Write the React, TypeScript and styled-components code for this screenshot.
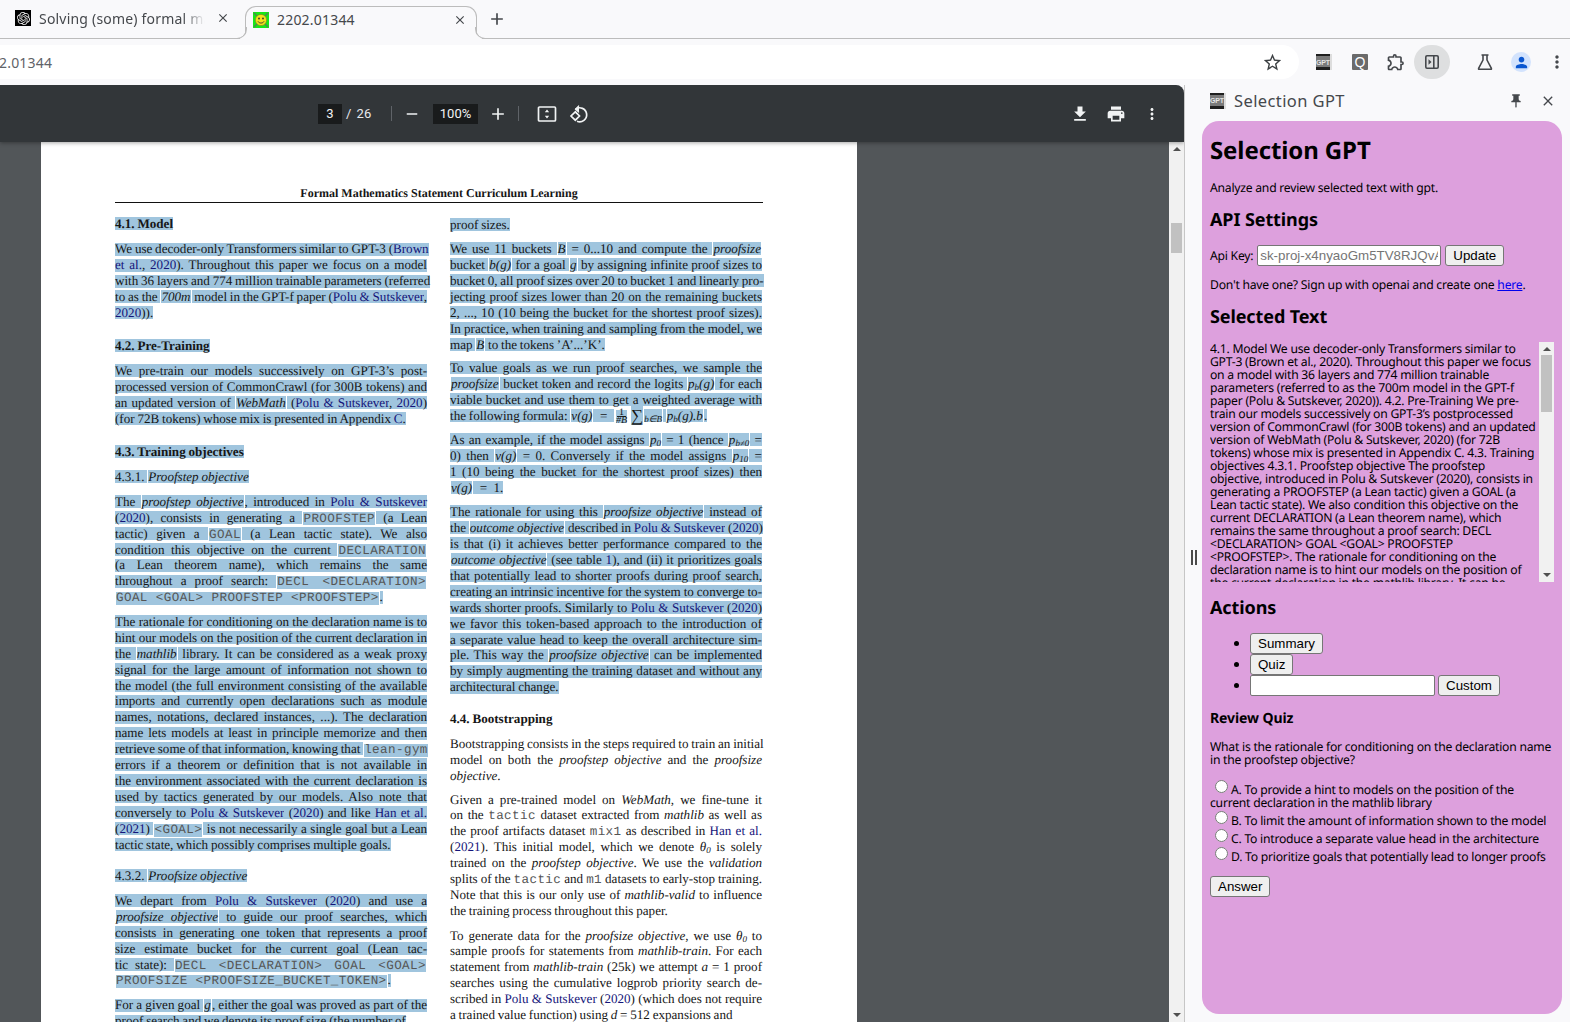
import React from "react";
import styled, { createGlobalStyle, css } from "styled-components";
import { SiOpenai } from "react-icons/si";
import {
  MdAdd, MdClose, MdFileDownload, MdMoreVert, MdOutlineExtension, MdPerson, MdPrint, MdPushPin, MdRemove, MdStarBorder,
} from "react-icons/md";

const chromeBg = "#f9f9fb";
const uiFont = `"Noto Sans", "Open Sans", sans-serif`;

const Global = createGlobalStyle`
  html, body { margin: 0; padding: 0; height: 100%; overflow: hidden; background: ${chromeBg}; }
  #root { height: 100%; }
  * { box-sizing: border-box; }
`;

const Window = styled.div`
  width: 1570px; height: 1022px; display: flex; flex-direction: column; overflow: hidden;
  background: ${chromeBg}; font-family: ${uiFont};
`;

/* ---------- tab strip ---------- */
const TabStrip = styled.div`
  height: 39px; flex: none; display: flex; align-items: flex-end;
  border-bottom: 1px solid #bcbcbc; position: relative;
`;
const Tab = styled.div<{ $active?: boolean }>`
  height: 32px; display: flex; align-items: center; position: relative; flex: none; font-size: 14px; letter-spacing: .2px; color: #45484c;
  ${(p) => p.$active ? css`
    width: 232px; margin-bottom: -1px; height: 33px; padding: 0 0 7px 7px; background: ${chromeBg};
    border: 1px solid #bcbcbc; border-bottom: 0; border-radius: 11px 11px 0 0;
    &::before, &::after {
      content: ""; position: absolute; bottom: 0; width: 10px; height: 11px; border: 0 solid #bcbcbc; border-bottom-width: 1px;
    }
    &::before { left: -10px; border-right-width: 1px; border-bottom-right-radius: 10px; box-shadow: 4px 3px 0 ${chromeBg}; }
    &::after { right: -10px; border-left-width: 1px; border-bottom-left-radius: 10px; box-shadow: -4px 3px 0 ${chromeBg}; }
  ` : css`width: 245px; padding-left: 15px; margin-bottom: 4px;`}
`;
const BlackFavicon = styled.span`
  width: 16px; height: 16px; background: #000; color: #eee; display: flex; align-items: center; justify-content: center; flex: none;
`;
const TabTitle = styled.span`
  flex: 1; margin-left: 8px; white-space: nowrap; overflow: hidden; min-width: 0;
`;
const FadedTitle = styled(TabTitle)`
  -webkit-mask-image: linear-gradient(90deg, #000 84%, transparent 97%);
  mask-image: linear-gradient(90deg, #000 84%, transparent 97%);
`;
const TabClose = styled.span<{ $right: number }>`
  width: 16px; margin: 0 ${(p) => p.$right}px 0 6px; display: flex; color: #45484c; flex: none;
`;
const NewTab = styled.span`
  margin-left: 10px; margin-bottom: 3px; width: 20px; height: 32px; display: flex; align-items: center; justify-content: center; color: #45484c;
`;

/* ---------- toolbar ---------- */
const Toolbar = styled.div`
  height: 46px; flex: none; display: flex; align-items: center;
`;
const Omnibox = styled.div`
  width: 1299px; flex: none; height: 34px; background: #fff; border-radius: 0 17px 17px 0; display: flex; align-items: center; justify-content: space-between;
  padding-right: 16px; font-size: 14px; letter-spacing: .2px; color: #5f6368; overflow: hidden;
`;
const UrlText = styled.span`
  margin-left: -1px;
`;
const ToolSlot = styled.span<{ $on?: boolean; $gapLeft?: number }>`
  width: 36px; height: 34px; flex: none; display: flex; align-items: center; justify-content: center; color: #45484c;
  margin-left: ${(p) => p.$gapLeft ?? 0}px;
  ${(p) => p.$on && css`background: #dedfe0; border-radius: 17px;`}
`;
const GptBadge = styled.span<{ $size: number }>`
  width: ${(p) => p.$size}px; height: ${(p) => p.$size}px; display: flex; align-items: center; justify-content: center; flex: none;
  background: linear-gradient(#1f1f1f 0 2px, #7a7a7a 2px 13px, #1f1f1f 13px); color: #e4e4e4;
  font: 700 7px "Liberation Sans", sans-serif; border-right: 2px solid #ddd; letter-spacing: -.2px;
`;
const QBadge = styled.span`
  width: 16px; height: 16px; background: #6a6a6a; color: #fff; border-radius: 1px; display: flex; align-items: center; justify-content: center;
  font: 400 14px "Liberation Sans", sans-serif;
`;
const Avatar = styled.span`
  width: 20px; height: 20px; border-radius: 50%; background: #d3e3fd; color: #0b57d0; display: flex; align-items: center; justify-content: center;
`;

/* ---------- main ---------- */
const Main = styled.div`
  flex: 1; min-height: 0; display: flex;
`;
const Viewer = styled.div`
  width: 1184px; flex: none; display: flex; flex-direction: column; border-top-right-radius: 8px; overflow: hidden;
`;
const ViewerBar = styled.div`
  height: 57px; flex: none; background: #323639; display: flex; align-items: center; color: #f1f3f4; font: 400 13px Roboto, sans-serif;
  position: relative; box-shadow: 0 1px 4px rgba(0,0,0,.35); padding: 0 14px 0 318px; z-index: 1;
`;
const DarkField = styled.span<{ $w: number }>`
  width: ${(p) => p.$w}px; height: 20px; background: #191b1c; display: flex; align-items: center; justify-content: center; flex: none;
`;
const PageCount = styled.span`
  margin-left: 4px; width: 27px; word-spacing: 2px; color: #e8eaed;
`;
const BarSep = styled.span<{ $left: number }>`
  width: 1px; height: 15px; background: #5f6368; margin-left: ${(p) => p.$left}px; flex: none;
`;
const BarSlot = styled.span<{ $w: number; $left?: number }>`
  width: ${(p) => p.$w}px; margin-left: ${(p) => p.$left ?? 0}px; height: 24px; display: flex; align-items: center; justify-content: center; flex: none;
`;
const ZoomField = styled(DarkField)`
  margin-left: 9px;
`;
const BarRight = styled.div`
  margin-left: auto; display: flex;
`;
const ViewerBody = styled.div`
  flex: 1; min-height: 0; display: flex;
`;
const Canvas = styled.div`
  flex: 1; background: #525659; padding-left: 41px; overflow: hidden;
`;
const VScroll = styled.div<{ $w: number }>`
  width: ${(p) => p.$w}px; flex: none; background: #f1f1f1; display: flex; flex-direction: column; align-items: center; position: relative;
`;
const Arrow = styled.span<{ $down?: boolean }>`
  width: 0; height: 0; border-left: 4px solid transparent; border-right: 4px solid transparent; flex: none; position: absolute; left: calc(50% - 4px);
  ${(p) => p.$down
    ? css`bottom: 5px; border-top: 4px solid #505050;`
    : css`top: 5px; border-bottom: 4px solid #505050;`}
`;
const Thumb = styled.span<{ $top: number; $h: number }>`
  position: absolute; left: 2px; right: 2px; top: ${(p) => p.$top}px; height: ${(p) => p.$h}px; background: #c1c1c1;
`;

/* ---------- pdf page ---------- */
const Sheet = styled.div`
  width: 816px; height: 880px; background: #fff; padding: 43px 94px 0 74px; font: 400 13.1px/15.94px "Liberation Serif", serif; color: #161616; overflow: hidden;
  text-rendering: geometricPrecision; word-spacing: -.5px;
`;
const RunningHead = styled.div`
  font-weight: 700; font-size: 12px; text-align: center; height: 17.5px; padding-top: 1px; border-bottom: 1.4px solid #111; word-spacing: 0;
`;
const Columns = styled.div`
  display: grid; grid-template-columns: 312px 312px; column-gap: 23px; margin-top: 13px;
`;
const Para = styled.div<{ $top: number }>`
  margin-top: ${(p) => p.$top}px;
`;
const Line = styled.div<{ $last?: boolean }>`
  height: 15.94px; white-space: nowrap; text-align: justify; text-align-last: ${(p) => (p.$last ? "left" : "justify")};
`;
const Seg = styled.span<{ $sel?: boolean; $kind: string }>`
  ${(p) => p.$sel && css`background: linear-gradient(#a0c5de, #a0c5de) 0 60% / 100% 13px no-repeat;`}
  ${(p) => (p.$kind === "i" || p.$kind === "math") && css`font-style: italic;`}
  ${(p) => p.$kind === "b" && css`font-weight: 700;`}
  ${(p) => p.$kind === "link" && css`color: #15157a;`}
  ${(p) => p.$kind === "mono" && css`font-family: "Liberation Mono", monospace; font-size: 12.6px; letter-spacing: .4px; word-spacing: 0; color: #555;`}
  ${(p) => p.$sel && (p.$kind === "i" || p.$kind === "math" || p.$kind === "mono") && css`margin: 0 1px;`}
`;
const Sub = styled.sub`
  font-size: 9px; line-height: 0; vertical-align: -2px;
`;
const Frac = styled.span`
  display: inline-flex; flex-direction: column; align-items: center; vertical-align: middle; font-size: 10px; margin: 0 2px;
  background: #a0c5de; height: 13px;
`;
const FracTop = styled.span`
  border-bottom: 1px solid #222; padding: 0 2px; line-height: 6px;
`;
const FracBottom = styled.span`
  font-style: italic; line-height: 7px;
`;
const BigSum = styled.span`
  font-size: 17px; line-height: 0; vertical-align: -1px; background: #a0c5de; margin-left: 2px;
`;

type P = { t: number; sel?: boolean; bold?: boolean; lines: string[] };

const col1: P[] = [
  { t: 0, sel: true, bold: true, lines: ["4.1. Model"] },
  { t: 10, sel: true, lines: [
    "We use decoder-only Transformers similar to GPT-3 ({Brown}",
    "{et al.}, {2020}). Throughout this paper we focus on a model",
    "with 36 layers and 774 million trainable parameters (referred",
    "to as the _700m_ model in the GPT-f paper ({Polu & Sutskever},",
    "{2020})).",
  ] },
  { t: 17, sel: true, bold: true, lines: ["4.2. Pre-Training"] },
  { t: 9, sel: true, lines: [
    "We pre-train our models successively on GPT-3’s post-",
    "processed version of CommonCrawl (for 300B tokens) and",
    "an updated version of _WebMath_ ({Polu & Sutskever}, {2020})",
    "(for 72B tokens) whose mix is presented in Appendix {C}.",
  ] },
  { t: 17, sel: true, bold: true, lines: ["4.3. Training objectives"] },
  { t: 9, sel: true, lines: ["4.3.1. _Proofstep objective_"] },
  { t: 9, sel: true, lines: [
    "The _proofstep objective_, introduced in {Polu & Sutskever}",
    "({2020}), consists in generating a `PROOFSTEP` (a Lean",
    "tactic) given a `GOAL` (a Lean tactic state). We also",
    "condition this objective on the current `DECLARATION`",
    "(a Lean theorem name), which remains the same",
    "throughout a proof search: `DECL <DECLARATION>`",
    "`GOAL <GOAL> PROOFSTEP <PROOFSTEP>`.",
  ] },
  { t: 8.5, sel: true, lines: [
    "The rationale for conditioning on the declaration name is to",
    "hint our models on the position of the current declaration in",
    "the _mathlib_ library. It can be considered as a weak proxy",
    "signal for the large amount of information not shown to",
    "the model (the full environment consisting of the available",
    "imports and currently open declarations such as module",
    "names, notations, declared instances, ...). The declaration",
    "name lets models at least in principle memorize and then",
    "retrieve some of that information, knowing that `lean-gym`",
    "errors if a theorem or definition that is not available in",
    "the environment associated with the current declaration is",
    "used by tactics generated by our models. Also note that",
    "conversely to {Polu & Sutskever} ({2020}) and like {Han et al.}",
    "({2021}) `<GOAL>` is not necessarily a single goal but a Lean",
    "tactic state, which possibly comprises multiple goals.",
  ] },
  { t: 15, sel: true, lines: ["4.3.2. _Proofsize objective_"] },
  { t: 9, sel: true, lines: [
    "We depart from {Polu & Sutskever} ({2020}) and use a",
    "_proofsize objective_ to guide our proof searches, which",
    "consists in generating one token that represents a proof",
    "size estimate bucket for the current goal (Lean tac-",
    "tic state): `DECL <DECLARATION> GOAL <GOAL>`",
    "`PROOFSIZE <PROOFSIZE_BUCKET_TOKEN>`.",
  ] },
  { t: 9, sel: true, lines: [
    "For a given goal $g$, either the goal was proved as part of the",
    "proof search and we denote its proof size (the number of",
  ] },
];

const col2: P[] = [
  { t: 1, sel: true, lines: ["proof sizes."] },
  { t: 8.5, sel: true, lines: [
    "We use 11 buckets $B$ = 0...10 and compute the _proofsize_",
    "bucket $b(g)$ for a goal $g$ by assigning infinite proof sizes to",
    "bucket 0, all proof sizes over 20 to bucket 1 and linearly pro-",
    "jecting proof sizes lower than 20 on the remaining buckets",
    "2, ..., 10 (10 being the bucket for the shortest proof sizes).",
    "In practice, when training and sampling from the model, we",
    "map $B$ to the tokens ’A’...’K’.",
  ] },
  { t: 7.5, sel: true, lines: [
    "To value goals as we run proof searches, we sample the",
    "_proofsize_ bucket token and record the logits $p~b~(g)$ for each",
    "viable bucket and use them to get a weighted average with",
    "the following formula: $v(g)$\u2002=\u2002^%$~b∈B~$ $p~b~(g).b$.",
  ] },
  { t: 8, sel: true, lines: [
    "As an example, if the model assigns $p~0~$ = 1 (hence $p~b≠0~$ =",
    "0) then $v(g)$ = 0. Conversely if the model assigns $p~10~$ =",
    "1 (10 being the bucket for the shortest proof sizes) then",
    "$v(g)$\u2002=\u20021.",
  ] },
  { t: 8.5, sel: true, lines: [
    "The rationale for using this _proofsize objective_ instead of",
    "the _outcome objective_ described in {Polu & Sutskever} ({2020})",
    "is that (i) it achieves better performance compared to the",
    "_outcome objective_ (see table {1}), and (ii) it prioritizes goals",
    "that potentially lead to shorter proofs during proof search,",
    "creating an intrinsic incentive for the system to converge to-",
    "wards shorter proofs. Similarly to {Polu & Sutskever} ({2020})",
    "we favor this token-based approach to the introduction of",
    "a separate value head to keep the overall architecture sim-",
    "ple. This way the _proofsize objective_ can be implemented",
    "by simply augmenting the training dataset and without any",
    "architectural change.",
  ] },
  { t: 15.5, bold: true, lines: ["4.4. Bootstrapping"] },
  { t: 9, lines: [
    "Bootstrapping consists in the steps required to train an initial",
    "model on both the _proofstep objective_ and the _proofsize_",
    "_objective_.",
  ] },
  { t: 8, lines: [
    "Given a pre-trained model on _WebMath_, we fine-tune it",
    "on the `tactic` dataset extracted from _mathlib_ as well as",
    "the proof artifacts dataset `mix1` as described in {Han et al.}",
    "({2021}). This initial model, which we denote $θ~0~$ is solely",
    "trained on the _proofstep objective_. We use the _validation_",
    "splits of the `tactic` and `m1` datasets to early-stop training.",
    "Note that this is our only use of _mathlib-valid_ to influence",
    "the training process throughout this paper.",
  ] },
  { t: 8.5, lines: [
    "To generate data for the _proofsize objective_, we use $θ~0~$ to",
    "sample proofs for statements from _mathlib-train_. For each",
    "statement from _mathlib-train_ (25k) we attempt $a$ = 1 proof",
    "searches using the cumulative logprob priority search de-",
    "scribed in {Polu & Sutskever} ({2020}) (which does not require",
    "a trained value function) using $d$ = 512 expansions and",
  ] },
];

const renderMath = (s: string) =>
  s.split(/(~[^~]*~)/).filter(Boolean).map((b, i) =>
    b.startsWith("~") ? <Sub key={i}>{b.slice(1, -1)}</Sub> : <React.Fragment key={i}>{b}</React.Fragment>
  );

const RichLine = ({ text, sel, bold }: { text: string; sel?: boolean; bold?: boolean }) => {
  const parts = text.split(/(_[^_]*_|\{[^}]*\}|`[^`]*`|\$[^$]*\$|\^|%)/).filter(Boolean);
  return (
    <>
      {parts.map((s, i) => {
        const inner = s.slice(1, -1);
        if (s === "^") return <Frac key={i}><FracTop>1</FracTop><FracBottom>#B</FracBottom></Frac>;
        if (s === "%") return <BigSum key={i}>∑</BigSum>;
        if (s.startsWith("`")) return <Seg key={i} $sel={sel} $kind="mono">{inner}</Seg>;
        if (s.startsWith("{")) return <Seg key={i} $sel={sel} $kind="link">{inner}</Seg>;
        if (s.startsWith("$")) return <Seg key={i} $sel={sel} $kind="math">{renderMath(inner)}</Seg>;
        if (s.startsWith("_") && s.endsWith("_") && s.length > 1) return <Seg key={i} $sel={sel} $kind="i">{inner}</Seg>;
        return <Seg key={i} $sel={sel} $kind={bold ? "b" : "t"}>{s}</Seg>;
      })}
    </>
  );
};

const Column = ({ paras }: { paras: P[] }) => (
  <div>
    {paras.map((p, i) => (
      <Para key={i} $top={p.t}>
        {p.lines.map((l, j) => (
          <Line key={j} $last={j === p.lines.length - 1}>
            <RichLine text={l} sel={p.sel} bold={p.bold} />
          </Line>
        ))}
      </Para>
    ))}
  </div>
);

/* ---------- side panel ---------- */
const Side = styled.div`
  flex: 1; min-width: 0; display: flex; flex-direction: column; border-left: 1px solid #c6c6c6; position: relative;
`;
const Grip = styled.span`
  position: absolute; left: 6px; top: 465px; width: 6px; height: 15px; border-left: 2px solid #4a4a4a; border-right: 2px solid #4a4a4a;
`;
const SideHead = styled.div`
  height: 36px; flex: none; display: flex; align-items: center; padding: 0 0 5px 25px; color: #45484c;
`;
const SideTitle = styled.span`
  font-size: 16.5px; margin-left: 8px; letter-spacing: .4px; width: 126px; white-space: nowrap;
`;
const HeadBtn = styled.span<{ $left?: string; $w: number }>`
  width: ${(p) => p.$w}px; display: flex; justify-content: center; flex: none; margin-left: ${(p) => p.$left ?? 0};
`;
const Panel = styled.div`
  margin: 0 8px 8px 17px; flex: 1; min-height: 0; background: #dda0dd; border-radius: 17px; padding: 0 8px; color: #000;
  font: 400 12.2px/13px ${uiFont}; letter-spacing: -.25px; overflow: hidden; text-rendering: geometricPrecision;
`;
const H1 = styled.h1`
  font-size: 24px; line-height: 30px; font-weight: 700; margin: 15px 0 0; letter-spacing: -.1px;
`;
const H2 = styled.h2<{ $top: number }>`
  font-size: 18px; line-height: 24px; font-weight: 700; margin: ${(p) => p.$top}px 0 0; letter-spacing: -.1px;
`;
const H3 = styled.h3`
  font-size: 14px; line-height: 18px; font-weight: 700; margin: 14px 0 0; letter-spacing: -.1px;
`;
const Text = styled.p<{ $top: number }>`
  margin: ${(p) => p.$top}px 0 0;
`;
const KeyRow = styled.div`
  display: flex; align-items: center; margin-top: 13px; height: 21px;
`;
const Field = styled.input<{ $w: number; $left: number }>`
  width: ${(p) => p.$w}px; height: 21px; margin: 0 0 0 ${(p) => p.$left}px; padding: 1px 2px; border: 1px solid #767676; border-radius: 2px; background: #fff; outline: none;
  font: 400 13.33px "Liberation Sans", sans-serif; color: #757575; letter-spacing: 0; flex: none; text-rendering: auto;
`;
const Btn = styled.button<{ $left?: number }>`
  height: 21px; padding: 1px 7px; margin: 0 0 0 ${(p) => p.$left ?? 0}px; font: 400 13.33px "Liberation Sans", sans-serif; color: #000; letter-spacing: 0;
  background: #efefef; border: 1px solid #767676; border-radius: 3px; flex: none; text-rendering: auto;
`;
const Link = styled.a`
  color: #0000ee; text-decoration: underline;
`;
const SelectedWrap = styled.div`
  height: 240px; margin-top: 13px; display: flex;
`;
const SelectedText = styled.div`
  flex: 1; min-width: 0; overflow: hidden; white-space: nowrap;
`;
const ActionList = styled.ul`
  list-style: disc; margin: 13px 0 0; padding: 0 0 0 40px;
`;
const ActionItem = styled.li`
  height: 21px; line-height: 21px;
  &::marker { font-size: 13px; }
`;
const ActionRow = styled.div`
  display: flex; align-items: center; height: 21px;
`;
const RadioRow = styled.div<{ $gap?: number }>`
  margin-top: ${(p) => p.$gap ?? 2}px;
`;
const Radio = styled.input`
  width: 13px; height: 13px; margin: 0 3px 0 5px; vertical-align: 1px;
`;

const selectedLines = [
  "4.1. Model We use decoder-only Transformers similar to",
  "GPT-3 (Brown et al., 2020). Throughout this paper we focus",
  "on a model with 36 layers and 774 million trainable",
  "parameters (referred to as the 700m model in the GPT-f",
  "paper (Polu & Sutskever, 2020)). 4.2. Pre-Training We pre-",
  "train our models successively on GPT-3’s postprocessed",
  "version of CommonCrawl (for 300B tokens) and an updated",
  "version of WebMath (Polu & Sutskever, 2020) (for 72B",
  "tokens) whose mix is presented in Appendix C. 4.3. Training",
  "objectives 4.3.1. Proofstep objective The proofstep",
  "objective, introduced in Polu & Sutskever (2020), consists in",
  "generating a PROOFSTEP (a Lean tactic) given a GOAL (a",
  "Lean tactic state). We also condition this objective on the",
  "current DECLARATION (a Lean theorem name), which",
  "remains the same throughout a proof search: DECL",
  "<DECLARATION> GOAL <GOAL> PROOFSTEP",
  "<PROOFSTEP>. The rationale for conditioning on the",
  "declaration name is to hint our models on the position of",
  "the current declaration in the mathlib library. It can be",
];

const SidePanelIcon = () => (
  <svg width="20" height="20" viewBox="0 0 20 20" fill="none" stroke="#45484c" strokeWidth="1.6">
    <rect x="3.8" y="3.8" width="12.4" height="12.4" rx="1.2" />
    <path d="M11.8 3.8v12.4" />
    <path d="M6.5 7.2l3 2.8-3 2.8z" fill="#45484c" stroke="none" />
  </svg>
);
const FlaskIcon = () => (
  <svg width="20" height="20" viewBox="0 0 20 20" fill="none" stroke="#45484c" strokeWidth="1.6" strokeLinejoin="round">
    <path d="M6.5 3h7M8 3v5L3.6 16.4a.6.6 0 0 0 .5.9h11.8a.6.6 0 0 0 .5-.9L12 8V3" />
  </svg>
);
const FitIcon = () => (
  <svg width="20" height="18" viewBox="0 0 20 18" fill="none">
    <rect x="1.5" y="2" width="17" height="14" rx="1" stroke="#f1f3f4" strokeWidth="1.7" />
    <path d="M10 4.5l2.2 2.8H7.8zM10 13.5l2.2-2.8H7.8z" fill="#f1f3f4" />
  </svg>
);
const RotateIcon = () => (
  <svg width="20" height="20" viewBox="0 0 20 20" fill="none" stroke="#f1f3f4" strokeWidth="1.7">
    <path d="M6.5 5.2A7 7 0 1 1 8 17.3" />
    <path d="M10 1.6L6.5 5.2 10 8.4" strokeWidth="1.2" fill="#f1f3f4" />
    <path d="M6.3 7.8L2 12l4.3 4.2 4.2-4.2z" />
  </svg>
);
const SmileyFavicon = () => (
  <svg width="16" height="16" viewBox="0 0 16 16">
    <rect width="16" height="16" fill="#19e619" />
    <path d="M1 1l3 3M15 1l-3 3M1 15l3-3M15 15l-3-3" stroke="#5a7a5a" strokeWidth="1.2" />
    <circle cx="8" cy="8" r="5.6" fill="#f4e21a" stroke="#8a8420" strokeWidth=".6" />
    <circle cx="6" cy="6.5" r=".9" fill="#333" />
    <circle cx="10" cy="6.5" r=".9" fill="#333" />
    <path d="M5 9.4c1 2.2 5 2.2 6 0" fill="none" stroke="#333" strokeWidth=".9" />
  </svg>
);

export default function App() {
  return (
    <Window>
      <Global />
      <TabStrip>
        <Tab>
          <BlackFavicon><SiOpenai size={13} /></BlackFavicon>
          <FadedTitle>Solving (some) formal math</FadedTitle>
          <TabClose $right={13}><MdClose size={14} /></TabClose>
        </Tab>
        <Tab $active>
          <SmileyFavicon />
          <TabTitle>2202.01344</TabTitle>
          <TabClose $right={7}><MdClose size={14} /></TabClose>
        </Tab>
        <NewTab><MdAdd size={20} /></NewTab>
      </TabStrip>
      <Toolbar>
        <Omnibox>
          <UrlText>2.01344</UrlText>
          <MdStarBorder size={21} color="#3c4043" />
        </Omnibox>
        <ToolSlot $gapLeft={7}><GptBadge $size={16}>GPT</GptBadge></ToolSlot>
        <ToolSlot><QBadge>Q</QBadge></ToolSlot>
        <ToolSlot><MdOutlineExtension size={20} /></ToolSlot>
        <ToolSlot $on><SidePanelIcon /></ToolSlot>
        <ToolSlot $gapLeft={17}><FlaskIcon /></ToolSlot>
        <ToolSlot><Avatar><MdPerson size={17} /></Avatar></ToolSlot>
        <ToolSlot><MdMoreVert size={20} /></ToolSlot>
      </Toolbar>
      <Main>
        <Viewer>
          <ViewerBar>
            <DarkField $w={24}>3</DarkField>
            <PageCount>/ 26</PageCount>
            <BarSep $left={18} />
            <BarSlot $w={24} $left={8}><MdRemove size={18} /></BarSlot>
            <ZoomField $w={45}>100%</ZoomField>
            <BarSlot $w={24} $left={8}><MdAdd size={20} /></BarSlot>
            <BarSep $left={8} />
            <BarSlot $w={32} $left={12}><FitIcon /></BarSlot>
            <BarSlot $w={32}><RotateIcon /></BarSlot>
            <BarRight>
              <BarSlot $w={36}><MdFileDownload size={20} /></BarSlot>
              <BarSlot $w={36}><MdPrint size={20} /></BarSlot>
              <BarSlot $w={36}><MdMoreVert size={18} /></BarSlot>
            </BarRight>
          </ViewerBar>
          <ViewerBody>
            <Canvas>
              <Sheet>
                <RunningHead>Formal Mathematics Statement Curriculum Learning</RunningHead>
                <Columns>
                  <Column paras={col1} />
                  <Column paras={col2} />
                </Columns>
              </Sheet>
            </Canvas>
            <VScroll $w={15}>
              <Arrow />
              <Thumb $top={81} $h={30} />
              <Arrow $down />
            </VScroll>
          </ViewerBody>
        </Viewer>
        <Side>
          <Grip />
          <SideHead>
            <GptBadge $size={16}>GPT</GptBadge>
            <SideTitle>Selection GPT</SideTitle>
            <HeadBtn $w={20} $left="146px"><MdPushPin size={16} /></HeadBtn>
            <HeadBtn $w={20} $left="12px"><MdClose size={16} /></HeadBtn>
          </SideHead>
          <Panel>
            <H1>Selection GPT</H1>
            <Text $top={15}>Analyze and review selected text with gpt.</Text>
            <H2 $top={14}>API Settings</H2>
            <KeyRow>
              Api Key:
              <Field $w={184} $left={4} readOnly value="sk-proj-x4nyaoGm5TV8RJQvA3xLm" />
              <Btn $left={4}>Update</Btn>
            </KeyRow>
            <Text $top={12}>Don't have one? Sign up with openai and create one <Link href="#">here</Link>.</Text>
            <H2 $top={14}>Selected Text</H2>
            <SelectedWrap>
              <SelectedText>
                {selectedLines.map((l) => <div key={l}>{l}</div>)}
              </SelectedText>
              <VScroll $w={15}>
                <Arrow />
                <Thumb $top={13} $h={57} />
                <Arrow $down />
              </VScroll>
            </SelectedWrap>
            <H2 $top={14}>Actions</H2>
            <ActionList>
              <ActionItem><ActionRow><Btn>Summary</Btn></ActionRow></ActionItem>
              <ActionItem><ActionRow><Btn>Quiz</Btn></ActionRow></ActionItem>
              <ActionItem>
                <ActionRow><Field $w={185} $left={0} readOnly value="" /><Btn $left={3}>Custom</Btn></ActionRow>
              </ActionItem>
            </ActionList>
            <H3>Review Quiz</H3>
            <Text $top={12}>What is the rationale for conditioning on the declaration name<br />in the proofstep objective?</Text>
            <RadioRow $gap={14}><Radio type="radio" name="q" />A. To provide a hint to models on the position of the<br />current declaration in the mathlib library</RadioRow>
            <RadioRow><Radio type="radio" name="q" />B. To limit the amount of information shown to the model</RadioRow>
            <RadioRow><Radio type="radio" name="q" />C. To introduce a separate value head in the architecture</RadioRow>
            <RadioRow><Radio type="radio" name="q" />D. To prioritize goals that potentially lead to longer proofs</RadioRow>
            <Text $top={13}><Btn>Answer</Btn></Text>
          </Panel>
        </Side>
      </Main>
    </Window>
  );
}
